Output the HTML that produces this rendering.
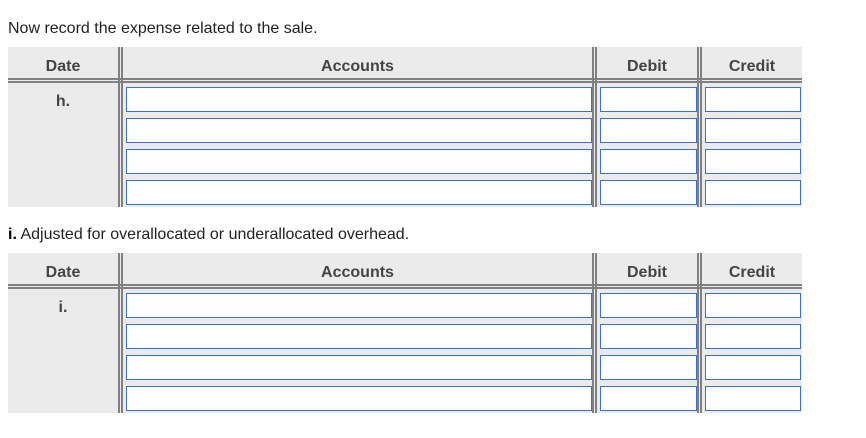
<!DOCTYPE html><html><head><style>
body{margin:0;width:866px;height:438px;background:#fff;font-family:"Liberation Sans",Arial,sans-serif;position:relative;overflow:hidden}
.a{position:absolute}
.t{color:#222;font-size:16px}
.bg{background:#ebebeb}
.v{background:#808080;width:2px}
.h{background:#808080;height:2px}
.hd{font-weight:bold;font-size:16px;color:#444;text-align:center}
.in{position:absolute;background:#fff;border:1px solid #3a6fd8;box-sizing:border-box;height:25px}
</style></head><body>
<div class="a t" style="left:8px;top:20px">Now record the expense related to the sale.</div>
<div class="a t" style="left:8px;top:226px"><b style="color:#000">i.</b> Adjusted for overallocated or underallocated overhead.</div>
<div id="T1"></div>
<script>
function tbl(top,label,rows){
 let h='';
 h+=`<div class="a bg" style="left:8px;top:${top}px;width:794px;height:160px"></div>`;
 [118,121,592,595,697,700].forEach(x=>h+=`<div class="a v" style="left:${x}px;top:${top}px;height:160px"></div>`);
 [31,34].forEach(y=>h+=`<div class="a h" style="left:8px;top:${top+y}px;width:794px"></div>`);
 const hy=top+11;
 h+=`<div class="a hd" style="left:8px;width:110px;top:${hy}px">Date</div>`;
 h+=`<div class="a hd" style="left:123px;width:469px;top:${hy}px">Accounts</div>`;
 h+=`<div class="a hd" style="left:597px;width:100px;top:${hy}px">Debit</div>`;
 h+=`<div class="a hd" style="left:702px;width:100px;top:${hy}px">Credit</div>`;
 h+=`<div class="a hd" style="left:8px;width:110px;top:${top+46}px">${label}</div>`;
 for(let i=0;i<4;i++){const y=top+40+i*31;
  h+=`<div class="in" style="left:126px;top:${y}px;width:466px"></div>`;
  h+=`<div class="in" style="left:600px;top:${y}px;width:97px"></div>`;
  h+=`<div class="in" style="left:705px;top:${y}px;width:96px"></div>`;}
 return h;}
document.getElementById('T1').innerHTML=tbl(47,'h.')+tbl(253,'i.');
</script>
</body></html>
